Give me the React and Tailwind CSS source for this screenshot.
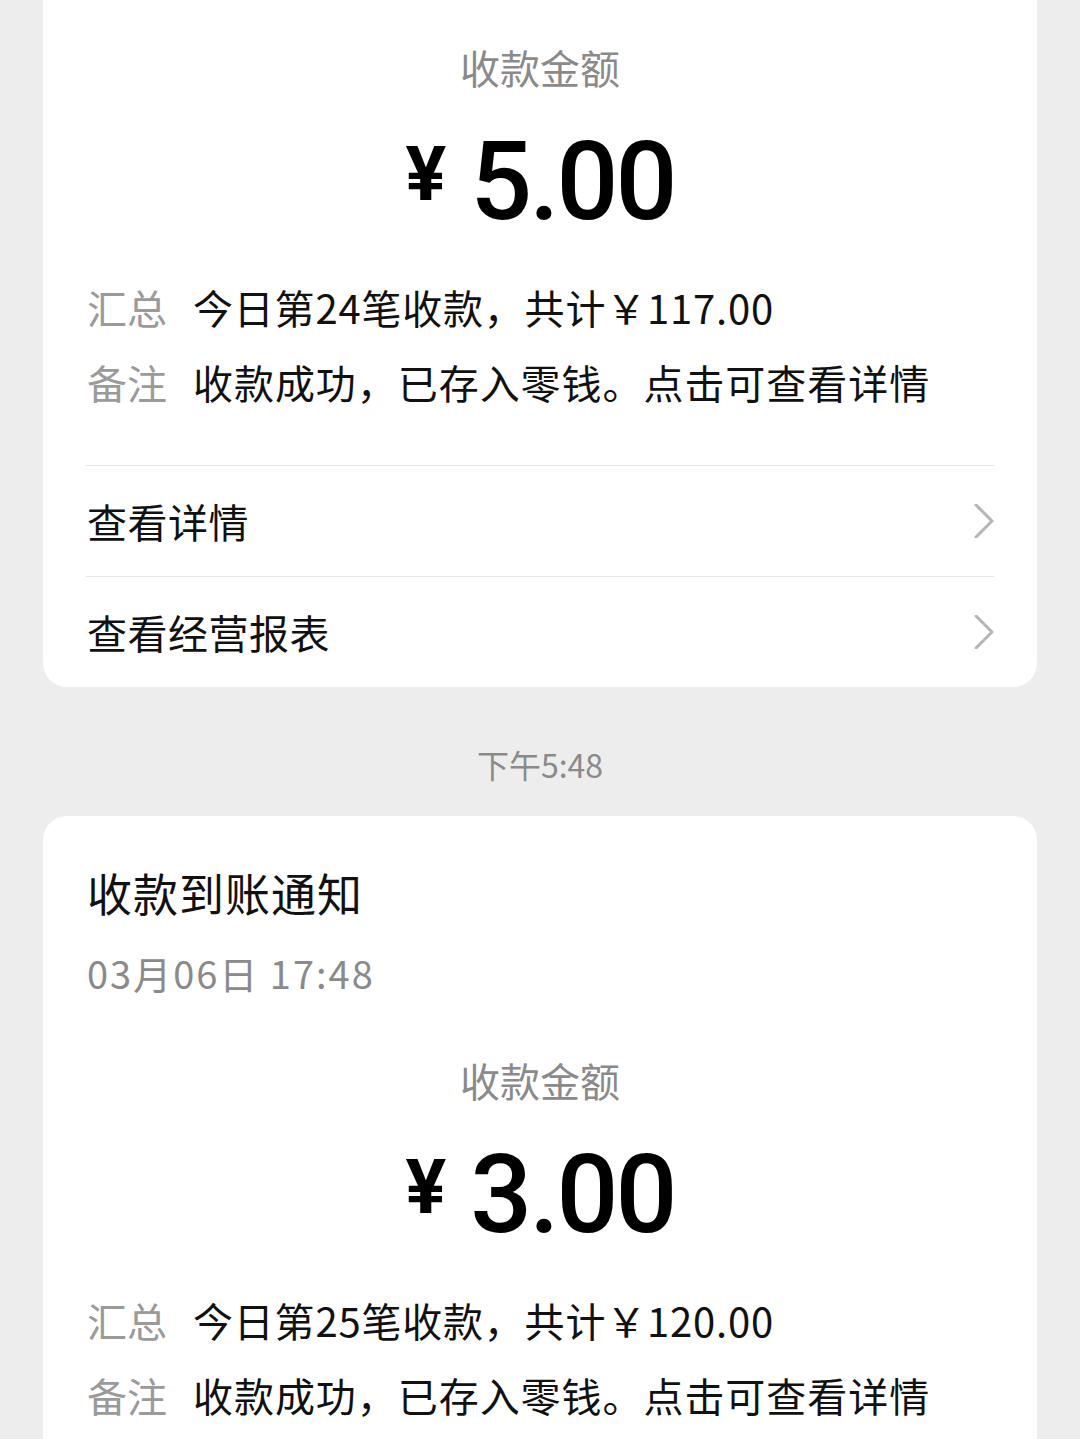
import React from "react";

const cjk = "font-['Noto_Sans_CJK_SC','Noto_Sans',sans-serif]";

function Chevron() {
  return (
    <svg width="20" height="34" viewBox="0 0 20 34" className="shrink-0">
      <polyline
        points="2,1 18,17 2,33"
        fill="none"
        stroke="#b5b5b5"
        strokeWidth="3"
        strokeLinecap="round"
        strokeLinejoin="round"
      />
    </svg>
  );
}

function Amount({ amount, count, total }) {
  return (
    <>
      <div className="text-center text-[40px] leading-[50px] text-[#8a8a8a]">收款金额</div>
      <div className="mt-[28px] h-[120px] flex justify-center items-center text-black">
        <span className="font-['Roboto',sans-serif] font-bold text-[76px] leading-none self-start mt-[16px] mr-[24px]">
          ¥
        </span>
        <span className="font-['Roboto',sans-serif] font-medium text-[109px] leading-[120px] tracking-[-3px] mt-[3px]">
          {amount}
        </span>
      </div>

      {/* summary */}
      <div className="mt-[30px] px-[1px] text-[40px] leading-[75px]">
        <div className="flex">
          <span className="text-[#9a9a9a] w-[106px] shrink-0">汇总</span>
          <span className="text-[#111] tracking-[0.8px]">
            今日第{count}笔收款，共计￥{total}
          </span>
        </div>
        <div className="flex">
          <span className="text-[#9a9a9a] w-[106px] shrink-0">备注</span>
          <span className="text-[#111] tracking-[0.95px]">收款成功，已存入零钱。点击可查看详情</span>
        </div>
      </div>
    </>
  );
}

function LinkRow({ label }) {
  return (
    <div className="h-[111px] border-t border-[#e6e6e6] flex items-center justify-between">
      <span className="text-[40px] text-[#111] pl-[1px] tracking-[0.5px]">{label}</span>
      <Chevron />
    </div>
  );
}

export default function App() {
  return (
    <div className={`${cjk} bg-[#ededed] h-[1439px] overflow-hidden px-[43px]`}>
      {/* earlier message, scrolled so its header sits above the screen */}
      <div className="bg-white rounded-b-[24px] px-[43px] pt-[42px]">
        <Amount amount="5.00" count="24" total="117.00" />
        <div className="mt-[45px]">
          <LinkRow label="查看详情" />
          <LinkRow label="查看经营报表" />
        </div>
      </div>

      <div className="pt-[52px] pb-[27px] text-center text-[32px] leading-[50px] text-[#8a8a8a]">
        下午5:48
      </div>

      {/* latest message */}
      <div className="bg-white rounded-t-[24px] px-[43px] pt-[52px] pb-[60px]">
        <div className="px-[1px]">
          <div className="text-[45px] leading-[50px] text-[#111] tracking-[1px]">收款到账通知</div>
          <div className="mt-[30px] text-[38px] leading-[50px] text-[#8a8a8a] tracking-[2px]">
            03月06日 17:48
          </div>
        </div>
        <div className="mt-[57px]">
          <Amount amount="3.00" count="25" total="120.00" />
        </div>
      </div>
    </div>
  );
}
